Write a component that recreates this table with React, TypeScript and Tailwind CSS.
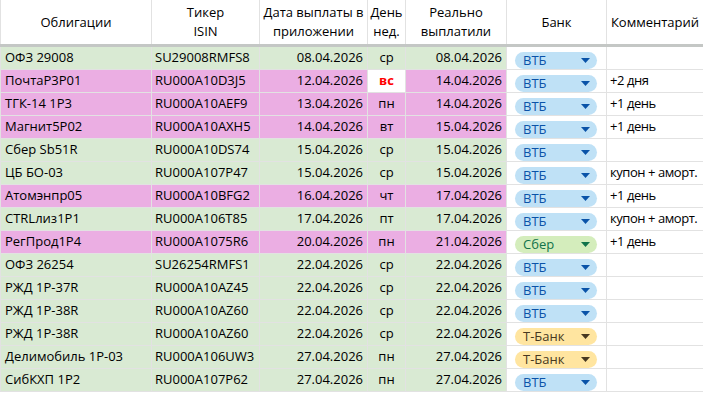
import React from "react";

type Row = {
  n: string;
  t: string;
  d: string;
  w: string;
  r: string;
  b: "ВТБ" | "Сбер" | "Т-Банк";
  c?: string;
  col: "g" | "p";
  red?: boolean;
};

const rows: Row[] = [
  { n: "ОФЗ 29008", t: "SU29008RMFS8", d: "08.04.2026", w: "ср", r: "08.04.2026", b: "ВТБ", col: "g" },
  { n: "ПочтаР3Р01", t: "RU000A10D3J5", d: "12.04.2026", w: "вс", r: "14.04.2026", b: "ВТБ", c: "+2 дня", col: "p", red: true },
  { n: "ТГК-14 1Р3", t: "RU000A10AEF9", d: "13.04.2026", w: "пн", r: "14.04.2026", b: "ВТБ", c: "+1 день", col: "p" },
  { n: "Магнит5Р02", t: "RU000A10AXH5", d: "14.04.2026", w: "вт", r: "15.04.2026", b: "ВТБ", c: "+1 день", col: "p" },
  { n: "Сбер Sb51R", t: "RU000A10DS74", d: "15.04.2026", w: "ср", r: "15.04.2026", b: "ВТБ", col: "g" },
  { n: "ЦБ БО-03", t: "RU000A107P47", d: "15.04.2026", w: "ср", r: "15.04.2026", b: "ВТБ", c: "купон + аморт.", col: "g" },
  { n: "Атомэнпр05", t: "RU000A10BFG2", d: "16.04.2026", w: "чт", r: "17.04.2026", b: "ВТБ", c: "+1 день", col: "p" },
  { n: "CTRLлиз1P1", t: "RU000A106T85", d: "17.04.2026", w: "пт", r: "17.04.2026", b: "ВТБ", c: "купон + аморт.", col: "g" },
  { n: "РегПрод1Р4", t: "RU000A1075R6", d: "20.04.2026", w: "пн", r: "21.04.2026", b: "Сбер", c: "+1 день", col: "p" },
  { n: "ОФЗ 26254", t: "SU26254RMFS1", d: "22.04.2026", w: "ср", r: "22.04.2026", b: "ВТБ", col: "g" },
  { n: "РЖД 1Р-37R", t: "RU000A10AZ45", d: "22.04.2026", w: "ср", r: "22.04.2026", b: "ВТБ", col: "g" },
  { n: "РЖД 1Р-38R", t: "RU000A10AZ60", d: "22.04.2026", w: "ср", r: "22.04.2026", b: "ВТБ", col: "g" },
  { n: "РЖД 1Р-38R", t: "RU000A10AZ60", d: "22.04.2026", w: "ср", r: "22.04.2026", b: "Т-Банк", col: "g" },
  { n: "Делимобиль 1Р-03", t: "RU000A106UW3", d: "27.04.2026", w: "пн", r: "27.04.2026", b: "Т-Банк", col: "g" },
  { n: "СибКХП 1Р2", t: "RU000A107P62", d: "27.04.2026", w: "пн", r: "27.04.2026", b: "ВТБ", col: "g" },
];

const chip: Record<Row["b"], { bg: string; fg: string }> = {
  "ВТБ": { bg: "bg-[#bfe1f6]", fg: "text-[#0a53a8]" },
  "Сбер": { bg: "bg-[#d4edbc]", fg: "text-[#11734b]" },
  "Т-Банк": { bg: "bg-[#ffe5a0]", fg: "text-[#473821]" },
};

const triFill: Record<Row["b"], string> = {
  "ВТБ": "#0a53a8",
  "Сбер": "#11734b",
  "Т-Банк": "#473821",
};

const cell = "border-r border-b border-[#e2e2e2] h-[23px] flex items-center overflow-hidden whitespace-nowrap";
const head = "border-r border-[#e2e2e2] h-[44px] flex items-center justify-center text-center leading-[19px]";

export default function App() {
  return (
    <div
      className="w-[703px] h-[395px] bg-white text-black text-[13px] overflow-hidden"
      style={{ fontFamily: '"Open Sans", "Noto Sans", sans-serif' }}
    >
      <div className="grid grid-cols-[152px_108px_108px_38px_101px_100px_96px]">
        <div className={`${head} border-l`}>Облигации</div>
        <div className={head}>Тикер<br />ISIN</div>
        <div className={head}>Дата выплаты в<br />приложении</div>
        <div className={head}>День<br />нед.</div>
        <div className={head}>Реально<br />выплатили</div>
        <div className={head}>Банк</div>
        <div className={`${head} border-r-0`}>Комментарий</div>
      </div>
      <div className="h-[3px] bg-[#c4c7c5]" />
      <div className="grid grid-cols-[152px_108px_108px_38px_101px_100px_96px]">
        {rows.map((r, i) => {
          const bg = r.col === "g" ? "bg-[#d9ead3]" : "bg-[#ebaee3]";
          const ch = chip[r.b];
          return (
            <React.Fragment key={i}>
              <div className={`${cell} ${bg} border-l pl-[4px]`}>{r.n}</div>
              <div className={`${cell} ${bg} pl-[3px]`}>{r.t}</div>
              <div className={`${cell} ${bg} justify-end pr-[4px]`}>{r.d}</div>
              <div
                className={`${cell} justify-center ${
                  r.red ? "bg-white text-[#ff0000] font-bold" : bg
                }`}
              >
                {r.w}
              </div>
              <div className={`${cell} ${bg} justify-end pr-[4px]`}>{r.r}</div>
              <div className={`${cell} items-start pt-[5px] pl-[8px]`}>
                <div
                  className={`w-[82px] h-[17px] rounded-full ${ch.bg} ${ch.fg} flex items-center justify-between pl-[8px] pr-[7px] leading-none`}
                >
                  <span>{r.b}</span>
                  <svg width="9" height="5" viewBox="0 0 9 5">
                    <path d="M0 0 L9 0 L4.5 5 Z" fill={triFill[r.b]} />
                  </svg>
                </div>
              </div>
              <div className={`${cell} border-r-0 pl-[3px] tracking-[-0.45px]`}>{r.c ?? ""}</div>
            </React.Fragment>
          );
        })}
      </div>
    </div>
  );
}
